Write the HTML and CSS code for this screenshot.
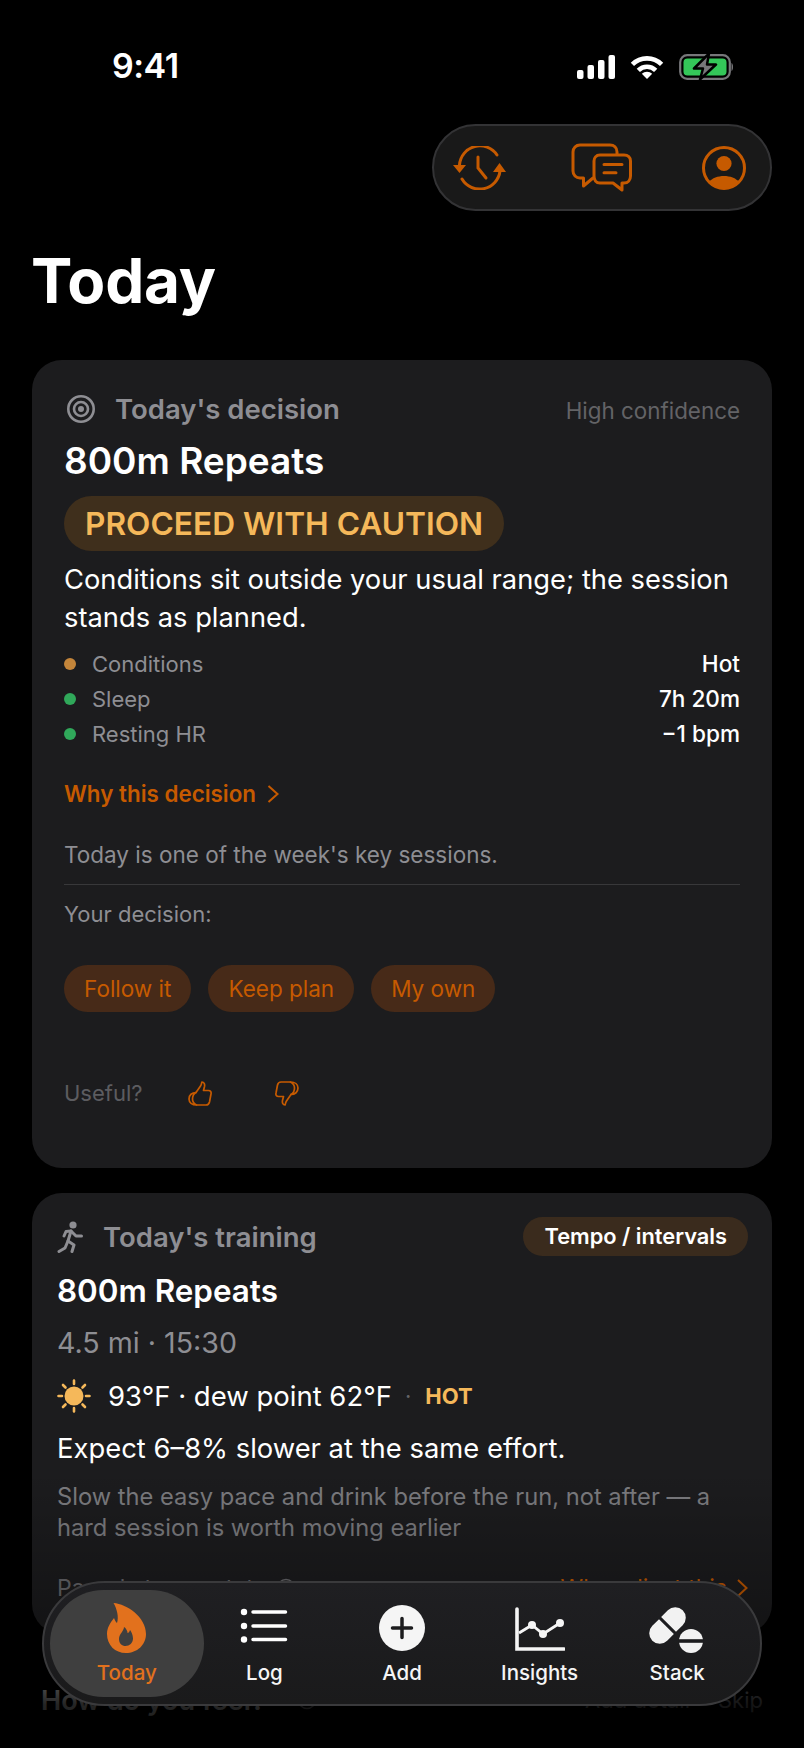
FILE: index.html
```html
<!DOCTYPE html>
<html lang="en">
<head>
    <meta charset="UTF-8">
    <meta name="viewport" content="width=device-width, initial-scale=1.0">
    <title>Today</title>
    <link rel="stylesheet" href="styles.css">
</head>
<body>
    <div class="phone">
        <div class="status">
            <span class="time">9:41</span>
            <div class="status-icons">
                <svg width="38" height="24" viewBox="0 0 38 24" fill="#fff">
                    <rect x="0" y="15" width="6.5" height="9" rx="2"/>
                    <rect x="10.5" y="10" width="6.5" height="14" rx="2"/>
                    <rect x="21" y="5" width="6.5" height="19" rx="2"/>
                    <rect x="31.5" y="0" width="6.5" height="24" rx="2"/>
                </svg>
                <svg width="34" height="24" viewBox="0 0 34 24">
                    <path d="M17 24 L11.8 18.8 A7.4 7.4 0 0 1 22.2 18.8Z" fill="#fff"/>
                    <path d="M8.3 15.3 A12.3 12.3 0 0 1 25.7 15.3" fill="none" stroke="#fff" stroke-width="4.6"/>
                    <path d="M2.4 9.4 A20.6 20.6 0 0 1 31.6 9.4" fill="none" stroke="#fff" stroke-width="4.6"/>
                </svg>
                <svg width="55" height="27" viewBox="0 0 55 27">
                    <rect x="1.2" y="2.2" width="49.6" height="23.6" rx="7" fill="none" stroke="#77777a" stroke-width="2.2"/>
                    <rect x="4.5" y="5.5" width="43" height="17" rx="4" fill="#34c759"/>
                    <path d="M52.5 10 C54.5 10.5 54.5 17.5 52.5 18Z" fill="#77777a"/>
                    <path d="M30 0.5 L15 15.5 H24 L21 26.5 L37 11.5 H28Z" fill="#77777a" stroke="#000" stroke-width="2.5" stroke-linejoin="round"/>
                </svg>
            </div>
        </div>

        <div class="topbar">
            <div class="toppill">
                <svg width="54" height="44" viewBox="0 0 54 44" fill="none" stroke="#c65a00" stroke-width="3" stroke-linecap="round">
                    <path d="M6.5 19 A20.5 20.5 0 0 1 44 9"/>
                    <path d="M9 33 A20.5 20.5 0 0 0 47 25"/>
                    <path d="M25 11 V22 L33 32"/>
                    <path d="M0 19 H13 L6.5 27Z M40 26 H53 L46.5 17Z" fill="#c65a00" stroke="none"/>
                </svg>
                <svg class="chat-icon" width="61" height="49" viewBox="0 0 61 49" fill="none" stroke="#c65a00" stroke-width="3" stroke-linecap="round" stroke-linejoin="round">
                    <path d="M46 11 V9 C46 4.5 43 2 39 2 H9 C5 2 2 5 2 9 V28 C2 32 5 35 9 35 H12.5 V43 L22 35"/>
                    <path d="M29 12 H53 C57 12 59.5 14.5 59.5 18 V33 C59.5 37 57 40 53 40 H51 V47 L42 40 H29 C25 40 23 37 23 33 V18 C23 15 25 12 29 12Z"/>
                    <path d="M33 21.5 H51 M33 29.7 H45"/>
                </svg>
                <svg width="44" height="44" viewBox="0 0 44 44">
                    <circle cx="22" cy="22" r="20.5" fill="none" stroke="#c65a00" stroke-width="3"/>
                    <circle cx="22" cy="17.5" r="7.6" fill="#c65a00"/>
                    <path d="M7 36 C10 32 16 30 22 30 C28 30 34 32 37 36 A20 20 0 0 1 7 36Z" fill="#c65a00"/>
                </svg>
            </div>
        </div>

        <h1 class="page-title">Today</h1>

        <section class="card card-decision">
            <div class="card-head decision-head">
                <svg width="28" height="28" viewBox="0 0 28 28" fill="none" stroke="#8e8e93" stroke-width="2.6">
                    <circle cx="14" cy="14" r="12.7"/>
                    <circle cx="14" cy="14" r="7"/>
                    <circle cx="14" cy="14" r="3" fill="#8e8e93" stroke="none"/>
                </svg>
                <span class="card-label">Today's decision</span>
                <span class="confidence">High confidence</span>
            </div>
            <h2 class="decision-title">800m Repeats</h2>
            <div class="verdict">PROCEED WITH CAUTION</div>
            <p class="decision-text">Conditions sit outside your usual range; the session stands as planned.</p>

            <div class="factors">
                <div class="factor"><i class="dot dot-amber"></i><span class="factor-name">Conditions</span><span class="factor-value">Hot</span></div>
                <div class="factor"><i class="dot dot-green"></i><span class="factor-name">Sleep</span><span class="factor-value">7h 20m</span></div>
                <div class="factor"><i class="dot dot-green"></i><span class="factor-name">Resting HR</span><span class="factor-value">−1 bpm</span></div>
            </div>

            <div class="why">Why this decision
                <svg width="12" height="18" viewBox="0 0 12 18" fill="none" stroke="#c65a00" stroke-width="2"><path d="M1.5 1 L10.5 9 L1.5 17"/></svg>
            </div>
            <p class="note">Today is one of the week's key sessions.</p>
            <hr class="divider">
            <p class="your-decision">Your decision:</p>

            <div class="choices">
                <button class="choice">Follow it</button>
                <button class="choice">Keep plan</button>
                <button class="choice">My own</button>
            </div>

            <div class="useful">
                <span class="useful-label">Useful?</span>
                <svg class="thumb" width="24" height="25" viewBox="0 0 24 25" fill="none" stroke="#c65a00" stroke-width="1.7" stroke-linejoin="round" stroke-linecap="round">
                    <path d="M8 11.5 L12.5 5 C13.5 3.5 13.5 2 14 1 C16 1 17 3 16.5 5.5 L15.5 9.5 H20.5 C22.5 9.5 23.5 11 23 13 L21.5 21 C21 23 20 24 18 24 H8.5"/>
                    <path d="M8 11.5 C4 11.5 1 14 1 18 C1 21.5 4 24 8.5 24 C5.5 22.5 4.5 20 4.5 18 C4.5 15.5 5.5 13 8 11.5Z"/>
                </svg>
                <svg class="thumb thumb-down" width="24" height="25" viewBox="0 0 24 25" fill="none" stroke="#c65a00" stroke-width="1.7" stroke-linejoin="round" stroke-linecap="round">
                    <path d="M8 11.5 L12.5 5 C13.5 3.5 13.5 2 14 1 C16 1 17 3 16.5 5.5 L15.5 9.5 H20.5 C22.5 9.5 23.5 11 23 13 L21.5 21 C21 23 20 24 18 24 H8.5"/>
                    <path d="M8 11.5 C4 11.5 1 14 1 18 C1 21.5 4 24 8.5 24 C5.5 22.5 4.5 20 4.5 18 C4.5 15.5 5.5 13 8 11.5Z"/>
                </svg>
            </div>
        </section>

        <section class="card card-training">
            <div class="card-head training-head">
                <svg width="26" height="32" viewBox="0 0 26 32" fill="none" stroke="#8e8e93" stroke-width="3" stroke-linecap="round" stroke-linejoin="round">
                    <circle cx="16" cy="4" r="3.6" fill="#8e8e93" stroke="none"/>
                    <path d="M14 10 L11 20 L17 24 L15 30.5"/>
                    <path d="M11 20 L8 27 L2 30.5"/>
                    <path d="M7 15 L9 10.5 L14 10 L19 15 L24.5 15"/>
                </svg>
                <span class="card-label">Today's training</span>
                <span class="session-type">Tempo / intervals</span>
            </div>
            <h2 class="training-title">800m Repeats</h2>
            <p class="training-meta">4.5 mi · 15:30</p>
            <div class="weather">
                <svg width="34" height="34" viewBox="0 0 34 34" fill="none" stroke="#f5b85a" stroke-width="2.6" stroke-linecap="round">
                    <circle cx="17" cy="17" r="9.5" fill="#f5b85a" stroke="none"/>
                    <path d="M17 1.5 V5 M17 29 V32.5 M1.5 17 H5 M29 17 H32.5 M6 6 L8.5 8.5 M25.5 25.5 L28 28 M6 28 L8.5 25.5 M25.5 8.5 L28 6"/>
                </svg>
                <span class="weather-text">93°F · dew point 62°F</span>
                <span class="weather-sep">·</span>
                <span class="weather-flag">HOT</span>
            </div>
            <p class="expect">Expect 6–8% slower at the same effort.</p>
            <p class="advice">Slow the easy pace and drink before the run, not after — a hard session is worth moving earlier</p>
            <div class="training-foot">
                <span class="foot-label">Paced at your stats</span>
                <svg width="20" height="20" viewBox="0 0 20 20" fill="none" stroke="#6a6a6e" stroke-width="1.6"><circle cx="10" cy="10" r="8.5"/></svg>
                <span class="foot-link">Why adjust this</span>
                <svg width="11" height="18" viewBox="0 0 11 18" fill="none" stroke="#c65a00" stroke-width="2"><path d="M1 1 L9.5 9 L1 17"/></svg>
            </div>
        </section>

        <div class="feel">
            <span class="feel-title">How do you feel?</span>
            <svg width="20" height="20" viewBox="0 0 20 20" fill="none" stroke="#8e8e93" stroke-width="1.6"><circle cx="10" cy="10" r="8.5"/></svg>
            <span class="feel-add">Add detail</span>
            <span class="feel-skip">Skip</span>
        </div>

        <div class="fade"></div>

        <nav class="tabbar">
            <div class="tab tab-active">
                <svg width="39" height="50" viewBox="0 0 39 50">
                    <path fill="#e2711d" fill-rule="evenodd" d="M6.5 0 C20 1 39 14 39 31 C39 42 30 50 19 50 C8 50 0 42 0 31 C0 25 3 20 7 15 C8 17.5 9 19.5 10 20 C12 14 10 6 6.5 0Z M17 24 C17 28 12 31 12 36 C12 40.5 15 43 18.5 43 C22.5 43 26 40 26 35.5 C26 32 24 28 23 27 C22.5 29 21.5 30 20.5 30 C20.5 28 19 25 17 24Z"/>
                </svg>
                <span>Today</span>
            </div>
            <div class="tab">
                <svg width="48" height="50" viewBox="0 0 48 50" fill="#fff" stroke="#fff">
                    <circle cx="4" cy="9" r="3.2" stroke="none"/>
                    <circle cx="4" cy="23" r="3.2" stroke="none"/>
                    <circle cx="4" cy="36.5" r="3.2" stroke="none"/>
                    <path d="M13 9 H45.5 M13 23 H45.5 M13 36.5 H45.5" stroke-width="3.5" stroke-linecap="round"/>
                </svg>
                <span>Log</span>
            </div>
            <div class="tab">
                <svg width="46" height="50" viewBox="0 0 46 50">
                    <circle cx="23" cy="25" r="23" fill="#f5f5f5"/>
                    <path d="M23 15.5 V34.5 M13.5 25 H32.5" stroke="#1c1c1e" stroke-width="3.5" stroke-linecap="round"/>
                </svg>
                <span>Add</span>
            </div>
            <div class="tab">
                <svg width="50" height="50" viewBox="0 0 50 50" fill="none" stroke="#f5f5f5">
                    <path d="M2 6 V46 H49" stroke-width="3.6" stroke-linecap="round"/>
                    <path d="M4 30 L17 22 L28 31 L45 20" stroke-width="2.8"/>
                    <circle cx="17" cy="22" r="4" fill="#f5f5f5" stroke="none"/>
                    <circle cx="28" cy="31" r="4" fill="#f5f5f5" stroke="none"/>
                    <circle cx="45" cy="20" r="4" fill="#f5f5f5" stroke="none"/>
                </svg>
                <span>Insights</span>
            </div>
            <div class="tab">
                <svg width="56" height="50" viewBox="0 0 56 50">
                    <g transform="rotate(-45 18.5 22.5)">
                        <path d="M17 12 H7.5 A10.5 10.5 0 0 0 7.5 33 H17Z" fill="#f2f2f2"/>
                        <path d="M20 12 H29.5 A10.5 10.5 0 0 1 29.5 33 H20Z" fill="#f2f2f2"/>
                    </g>
                    <circle cx="42" cy="38" r="12" fill="#f2f2f2"/>
                    <rect x="29" y="36.2" width="26" height="3.6" fill="#1c1c1e"/>
                </svg>
                <span>Stack</span>
            </div>
        </nav>
    </div>
</body>
</html>
```

FILE: styles.css
```css
* {
    box-sizing: border-box;
}
html, body {
    margin: 0;
    background: #000;
}
body {
    font-family: Inter, "Noto Sans", sans-serif;
    color: #fff;
}
p, h1, h2 {
    margin: 0;
}
svg {
    display: block;
    flex: none;
}
.phone {
    position: relative;
    width: 804px;
    height: 1748px;
    overflow: hidden;
    background: #000;
}

/* status bar */
.status {
    display: flex;
    justify-content: space-between;
    align-items: flex-end;
    height: 124px;
    padding: 0 70px 44px 112px;
}
.time {
    font-size: 34px;
    font-weight: 600;
    line-height: 28px;
    letter-spacing: -0.5px;
}
.status-icons {
    display: flex;
    align-items: center;
    gap: 15px;
    height: 27px;
}

/* top actions */
.topbar {
    display: flex;
    justify-content: flex-end;
    padding-right: 32px;
}
.toppill {
    display: flex;
    align-items: center;
    justify-content: space-between;
    width: 340px;
    height: 87px;
    padding: 0 24px 0 19px;
    background: #191919;
    border: 2px solid #333335;
    border-radius: 44px;
}
.chat-icon {
    margin-right: 6px;
}
.page-title {
    margin: 35px 0 0 31px;
    height: 70px;
    font-size: 62px;
    line-height: 70px;
    font-weight: 700;
    letter-spacing: -0.2px;
}

/* cards */
.card {
    margin: 0 32px;
    background: #1c1c1e;
    border-radius: 30px;
}
.card-decision {
    margin-top: 44px;
    padding: 33px 32px 60px;
}
.card-training {
    margin-top: 25px;
    padding: 24px 24px 31px 25px;
}
.card-head {
    display: flex;
    align-items: center;
    height: 32px;
    gap: 20px;
}
.decision-head {
    padding-left: 3px;
}
.card-label {
    font-size: 27.5px;
    font-weight: 600;
    color: #8e8e93;
}
.confidence {
    margin: 3px 0 0 auto;
    font-size: 22.4px;
    color: #636366;
}
.decision-title {
    margin-top: 14px;
    font-size: 37px;
    line-height: 44px;
    font-weight: 600;
}
.verdict {
    display: inline-block;
    margin-top: 13px;
    height: 55px;
    padding: 0 21px;
    font-size: 31.7px;
    line-height: 55px;
    font-weight: 600;
    color: #f5b85a;
    background: #3f2f1c;
    border-radius: 28px;
}
.decision-text {
    margin-top: 10px;
    font-size: 27.3px;
    line-height: 38px;
}
.factors {
    margin-top: 9px;
}
.factor {
    display: flex;
    align-items: center;
    height: 35px;
    font-size: 22px;
}
.dot {
    width: 12px;
    height: 12px;
    border-radius: 50%;
    margin-right: 16px;
}
.dot-amber {
    background: #c4853a;
}
.dot-green {
    background: #30a85a;
}
.factor-name {
    color: #8e8e93;
}
.factor-value {
    margin-left: auto;
    font-size: 22.6px;
    font-weight: 500;
}
.why {
    display: flex;
    align-items: center;
    gap: 11px;
    margin-top: 28px;
    font-size: 22.4px;
    line-height: 30px;
    font-weight: 600;
    color: #c65a00;
}
.note {
    margin-top: 31px;
    font-size: 22.5px;
    line-height: 30px;
    color: #8e8e93;
}
.divider {
    margin: 14px 0 0;
    border: 0;
    height: 1px;
    background: #38383a;
}
.your-decision {
    margin-top: 14px;
    font-size: 22px;
    line-height: 30px;
    color: #8e8e93;
}
.choices {
    display: flex;
    gap: 17px;
    margin-top: 36px;
}
.choice {
    height: 47px;
    padding: 0 20px;
    font-family: inherit;
    font-size: 22.5px;
    color: #c65a00;
    background: #472a18;
    border: 0;
    border-radius: 24px;
}
.useful {
    display: flex;
    align-items: center;
    height: 30px;
    margin-top: 66px;
}
.useful-label {
    width: 124px;
    font-size: 22px;
    color: #5c5c60;
}
.thumb-down {
    margin-left: 63px;
    transform: rotate(180deg);
}

/* training card */
.training-head {
    height: 39px;
    gap: 20px;
}
.session-type {
    margin-left: auto;
    height: 39px;
    padding: 0 21px;
    font-size: 21.8px;
    line-height: 39px;
    font-weight: 600;
    background: #3a2b1d;
    border-radius: 20px;
}
.training-title {
    margin-top: 15px;
    font-size: 31.4px;
    line-height: 40px;
    font-weight: 600;
}
.training-meta {
    margin-top: 14px;
    font-size: 28.6px;
    line-height: 36px;
    color: #8e8e93;
}
.weather {
    display: flex;
    align-items: center;
    margin-top: 17px;
    height: 36px;
}
.weather-text {
    margin-left: 17px;
    font-size: 27.5px;
}
.weather-sep {
    margin-left: 13px;
    font-size: 22px;
    color: #636366;
}
.weather-flag {
    margin-left: 14px;
    font-size: 22px;
    font-weight: 700;
    color: #f5b85a;
}
.expect {
    margin-top: 16px;
    font-size: 27.4px;
    line-height: 36px;
}
.advice {
    margin-top: 15px;
    font-size: 23.7px;
    line-height: 31px;
    color: #7c7c80;
}
.training-foot {
    display: flex;
    align-items: center;
    gap: 10px;
    margin-top: 30px;
    height: 30px;
    font-size: 23px;
    color: #6a6a6e;
}
.foot-link {
    margin-left: auto;
    color: #c65a00;
}

/* row hidden under the tab bar */
.feel {
    display: flex;
    align-items: center;
    margin-top: 48px;
    padding: 0 41px;
    height: 36px;
    color: #8e8e93;
}
.feel-title {
    margin-right: 32px;
    font-size: 27px;
    font-weight: 600;
    color: #fff;
}
.feel-add {
    margin-left: auto;
    font-size: 22px;
}
.feel-skip {
    margin-left: 28px;
    font-size: 22px;
}

/* overlays */
.fade {
    position: absolute;
    left: 0;
    right: 0;
    top: 1470px;
    bottom: 0;
    background: linear-gradient(to bottom, rgba(0,0,0,0) 0, rgba(0,0,0,0.32) 165px, rgba(0,0,0,0.86) 235px, rgba(0,0,0,0.9) 278px);
}
.tabbar {
    position: absolute;
    left: 42px;
    top: 1581px;
    width: 720px;
    height: 125px;
    display: grid;
    grid-template-columns: repeat(5, 1fr);
    padding: 7px 14px;
    background: linear-gradient(to bottom, #1f1f22, #1a1a1b);
    border: 2px solid #3a3a3c;
    border-radius: 63px;
}
.tab {
    display: flex;
    flex-direction: column;
    align-items: center;
    padding-top: 13px;
    gap: 7px;
    font-size: 20.5px;
    line-height: 26px;
    font-weight: 500;
    color: #f5f5f5;
}
.tab-active {
    margin: 0 -8px;
    color: #e2711d;
    background: #3f3f3f;
    border-radius: 54px;
}
```
